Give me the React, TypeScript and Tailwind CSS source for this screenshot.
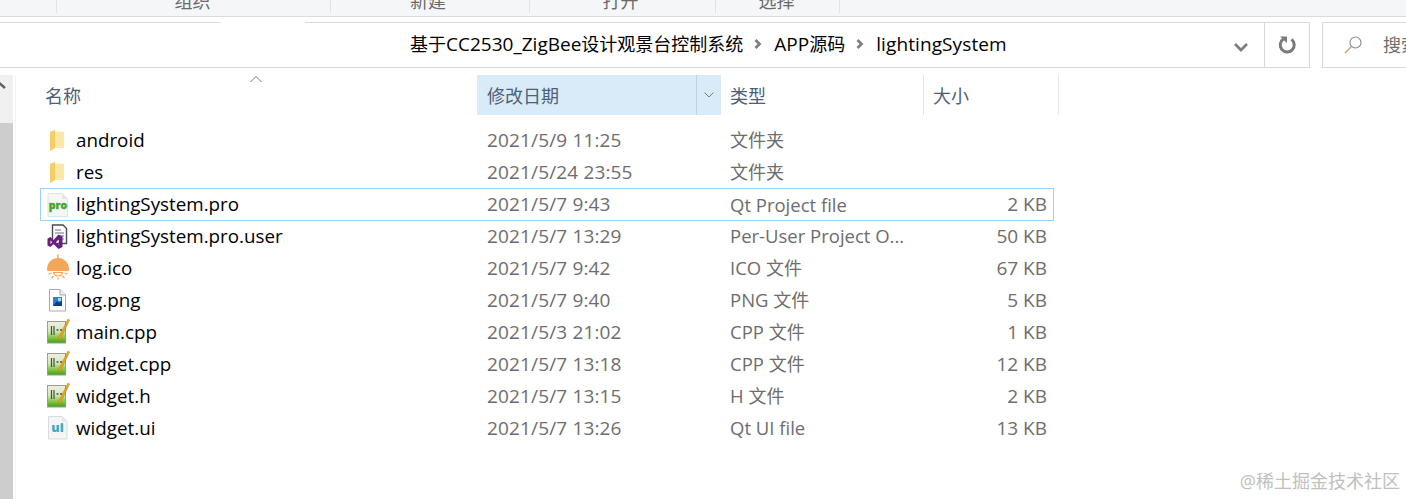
import React from "react";

const font = { fontFamily: '"Open Sans","Noto Sans CJK SC",sans-serif' };

function Mix({ text }: { text: string }) {
  const parts = text.split(/([\u4e00-\u9fff]+)/).filter(Boolean);
  return (
    <>
      {parts.map((p, i) =>
        /[\u4e00-\u9fff]/.test(p) ? (
          <span key={i} className="text-[18px]">{p}</span>
        ) : (
          <span key={i}>{p}</span>
        )
      )}
    </>
  );
}

function Folder() {
  return (
    <svg width="28" height="28" viewBox="0 0 28 28">
      <path d="M10 5.5 H20 V22 H10 Z" fill="#fde7a6" />
      <path d="M6 6 L10.5 4 L10.5 22 L7 25 L6 24 Z" fill="#f7cd66" />
      <path d="M10.5 4 V22" stroke="#ecbf55" strokeWidth="0.6" />
    </svg>
  );
}
function ProIcon() {
  return (
    <svg width="28" height="28" viewBox="0 0 28 28">
      <path d="M4 2.5 H18 L23.5 8 V25.5 H4 Z" fill="#f6f6f4" stroke="#e2e2e0" strokeWidth="1" />
      <path d="M18 2.5 V8 H23.5 Z" fill="#e6e6e4" />
      <text x="14" y="17.5" textAnchor="middle" fontSize="10.5" fontWeight="800" fill="#41a62a" stroke="#41a62a" strokeWidth="0.3" fontFamily="Open Sans">pro</text>
    </svg>
  );
}
function VsIcon() {
  return (
    <svg width="28" height="28" viewBox="0 0 28 28">
      <path d="M8.5 3 H19 L22.5 6.5 V21.5 H8.5 Z" fill="#fff" stroke="#4a4a58" strokeWidth="1.4" />
      <path d="M11 8 H17 M11 11 H20 M15 14 H20 M18 17 H20" stroke="#6f6f7c" strokeWidth="1.2" />
      <path d="M3.5 16.5 L6.5 15 L9.5 18 L14.5 12.5 L18.5 14.5 V25 L14.5 27 L9.5 22 L6.5 25 L3.5 23.5 Z M6.5 18.5 V22 L8.4 20.2 Z M11.8 20.2 L14.8 22.8 V17.6 Z" fill="#68217a" fillRule="evenodd" />
    </svg>
  );
}
function LampIcon() {
  return (
    <svg width="28" height="28" viewBox="0 0 28 28">
      <path d="M14 0.5 V5" stroke="#f6a24c" strokeWidth="1.3" />
      <path d="M3 15.5 C3 8.5 8 4 14 4 C20 4 25 8.5 25 15.5 C25 16.5 24.5 17 23.5 17 H4.5 C3.5 17 3 16.5 3 15.5 Z" fill="#f9a557" />
      <path d="M9.5 18.5 C10 21 12 22 14 22 C16 22 18 21 18.5 18.5 Z" fill="none" stroke="#f6a24c" strokeWidth="1.2" />
      <path d="M4.5 20 L7.5 19 M23.5 20 L20.5 19 M7.5 24 L9.5 22 M20.5 24 L18.5 22 M14 23.5 V25.5" stroke="#f6a24c" strokeWidth="1.2" />
    </svg>
  );
}
function PngIcon() {
  return (
    <svg width="28" height="28" viewBox="0 0 28 28">
      <path d="M5.5 3.5 H16 L21.5 9 V25 H5.5 Z" fill="#fff" stroke="#a3a9b0" strokeWidth="1" />
      <path d="M16 3.5 V9 H21.5" fill="#eef0f2" stroke="#a3a9b0" strokeWidth="1" />
      <rect x="9" y="11" width="9" height="9" fill="#2a7fd0" />
      <path d="M9 20 L13 15 L15.5 17 L18 14.5 V20 Z" fill="#0f3e80" />
      <rect x="14" y="12" width="3" height="3" fill="#a9d6f7" />
    </svg>
  );
}
function CppIcon() {
  const id = React.useId();
  return (
    <svg width="28" height="28" viewBox="0 0 28 28">
      <defs>
        <linearGradient id={id} x1="0" y1="0" x2="0" y2="1">
          <stop offset="0" stopColor="#eef0e6" />
          <stop offset="0.45" stopColor="#d5e8b8" />
          <stop offset="0.7" stopColor="#92cc4f" />
          <stop offset="1" stopColor="#3f9e17" />
        </linearGradient>
      </defs>
      <rect x="3.5" y="3.5" width="18" height="21.5" fill={`url(#${id})`} stroke="#9a9a9a" strokeWidth="1" />
      <path d="M7.5 8 V17 M10 8 V17" stroke="#4b4b4b" strokeWidth="1.2" />
      <path d="M12.5 12 H14.5 M16 12 H18" stroke="#4b4b4b" strokeWidth="1.4" />
      <path d="M24 1 L25.5 2 L17 20 L14.5 22.5 L14.8 19 Z" fill="#e9a520" stroke="#b07a14" strokeWidth="0.5" />
    </svg>
  );
}
function UiIcon() {
  return (
    <svg width="28" height="28" viewBox="0 0 28 28">
      <path d="M4.5 2.5 H18 L23 7.5 V25 H4.5 Z" fill="#f3f5f6" stroke="#d9dcde" strokeWidth="1" />
      <path d="M18 2.5 V7.5 H23 Z" fill="#e3e5e7" />
      <text x="13.5" y="18" textAnchor="middle" fontSize="12.5" fontWeight="800" fill="#3ba9c4" fontFamily="Open Sans">ui</text>
    </svg>
  );
}
function Crumb() {
  return (
    <svg width="10" height="12" viewBox="0 0 10 12" className="ml-[10px] mr-[11px]">
      <path d="M2.5 2 L6.5 6 L2.5 10" fill="none" stroke="#808080" strokeWidth="2.8" />
    </svg>
  );
}

const files = [
  { icon: <Folder />, name: "android", date: "2021/5/9 11:25", type: "文件夹", size: "" },
  { icon: <Folder />, name: "res", date: "2021/5/24 23:55", type: "文件夹", size: "" },
  { icon: <ProIcon />, name: "lightingSystem.pro", date: "2021/5/7 9:43", type: "Qt Project file", size: "2 KB", sel: true },
  { icon: <VsIcon />, name: "lightingSystem.pro.user", date: "2021/5/7 13:29", type: "Per-User Project O...", size: "50 KB" },
  { icon: <LampIcon />, name: "log.ico", date: "2021/5/7 9:42", type: "ICO 文件", size: "67 KB" },
  { icon: <PngIcon />, name: "log.png", date: "2021/5/7 9:40", type: "PNG 文件", size: "5 KB" },
  { icon: <CppIcon />, name: "main.cpp", date: "2021/5/3 21:02", type: "CPP 文件", size: "1 KB" },
  { icon: <CppIcon />, name: "widget.cpp", date: "2021/5/7 13:18", type: "CPP 文件", size: "12 KB" },
  { icon: <CppIcon />, name: "widget.h", date: "2021/5/7 13:15", type: "H 文件", size: "2 KB" },
  { icon: <UiIcon />, name: "widget.ui", date: "2021/5/7 13:26", type: "Qt UI file", size: "13 KB" },
];

export default function App() {
  return (
    <div style={font} className="relative flex h-[499px] w-[1406px] flex-col overflow-hidden bg-white text-[19px] text-black">
      {/* ribbon */}
      <div className="flex h-[17px] shrink-0 overflow-hidden border-b border-[#dadbdc] bg-[#f5f6f7] pl-[56px] text-[18px] text-[#6a6a6a]">
        {[
          ["组织", "w-[274px] pr-[2px]"],
          ["新建", "w-[199px] pr-[4px]"],
          ["打开", "w-[186px] pr-[4px]"],
          ["选择", "w-[125px] pr-[2px]"],
        ].map(([t, w]) => (
          <div key={t} className={`${w} flex h-[13px] justify-center border-l border-[#e2e3e5] leading-[3px] last:border-r`}>
            {t}
          </div>
        ))}
      </div>

      {/* address */}
      <div className="relative mt-[5px] flex h-[46px] shrink-0">
        <div className="absolute left-[221px] top-0 h-px w-[84px] bg-white" />
        <div className="flex w-[1265px] items-center border-y border-r border-[#d9d9d9] pb-[2px] pl-[410px] leading-none">
          <span><Mix text="基于CC2530_ZigBee设计观景台控制系统" /></span>
          <Crumb />
          <span><Mix text="APP源码" /></span>
          <Crumb />
          <span className="tracking-[0.1px]">lightingSystem</span>
          <svg width="16" height="10" viewBox="0 0 16 10" className="ml-[226px] mt-[5px]">
            <path d="M2 2 L8 8 L14 2" fill="none" stroke="#7f7f7f" strokeWidth="2.8" />
          </svg>
        </div>
        <div className="flex w-[45px] items-center justify-center border-y border-r border-[#d9d9d9]">
          <svg width="20" height="20" viewBox="0 0 20 20">
            <path d="M6.5 4 A7 7 0 1 0 14.5 4.4" fill="none" stroke="#7a7a7a" strokeWidth="3" />
            <path d="M3 1.5 H10 V8 Z" fill="#7a7a7a" />
          </svg>
        </div>
        <div className="ml-[12px] flex flex-1 items-center overflow-hidden whitespace-nowrap border-y border-l border-[#d9d9d9] pl-[20px] text-[18px] text-[#6d6d6d]">
          <svg width="20" height="20" viewBox="0 0 20 20" className="shrink-0">
            <circle cx="12.5" cy="7.5" r="5.5" fill="none" stroke="#7f8a96" strokeWidth="1.1" />
            <path d="M8.5 11.5 L2 18" stroke="#c9a27c" strokeWidth="1.4" />
          </svg>
          <span className="ml-[20px] shrink-0">搜索</span>
        </div>
      </div>

      {/* body */}
      <div className="mt-[7px] flex min-h-0 flex-1">
        <div className="flex w-[13px] shrink-0 flex-col bg-[#f0f0f0]">
          <svg width="13" height="48" viewBox="0 0 13 48" className="shrink-0">
            <path d="M-3 6 L5 13" fill="none" stroke="#606060" strokeWidth="2.4" />
          </svg>
          <div className="flex-1 bg-[#cdcdcd]" />
        </div>
        <div className="ml-[2px] w-px shrink-0 bg-[#f4f4f4]" />
        <div className="min-w-0 flex-1">
          {/* header */}
          <div className="relative ml-[28px] flex h-[40px] w-[1016px] text-[18px] text-[#4c607a]">
            <div className="flex w-[433px] items-center pl-px pt-[2px]">名称</div>
            <svg width="12" height="8" viewBox="0 0 12 8" className="absolute left-[206px] top-0">
              <path d="M0.5 7 L6 1.5 L11.5 7" fill="none" stroke="#757575" strokeWidth="1" />
            </svg>
            <div className="flex w-[244px] bg-[#d9ebf9]">
              <div className="flex w-[220px] items-center border-r border-[#bcd3e6] pl-[10px] pt-[2px]">修改日期</div>
              <div className="flex flex-1 items-center justify-center">
                <svg width="10" height="6" viewBox="0 0 10 6">
                  <path d="M0.5 0.5 L5 5 L9.5 0.5" fill="none" stroke="#6f7f8e" strokeWidth="1" />
                </svg>
              </div>
            </div>
            <div className="flex w-[203px] items-center border-r border-[#e5e5e5] pl-[9px] pt-[2px]">类型</div>
            <div className="flex w-[135px] items-center border-r border-[#e5e5e5] pl-[9px] pt-[2px]">大小</div>
          </div>

          {/* rows */}
          <div className="ml-[24px] mt-[9px] w-[1014px]">
            {files.map((f) => (
              <div
                key={f.name}
                className={`flex items-center ${f.sel ? "-mb-px h-[33px] border border-[#99d1ff]" : "h-8 border border-transparent"}`}
              >
                <div className="ml-[3px] h-[28px] w-[28px] shrink-0">{f.icon}</div>
                <div className="w-[415px] shrink-0 pl-[4px] text-[18.8px]">{f.name}</div>
                <div className="w-[243px] shrink-0 tracking-[0.15px] text-[#6d6d6d]">{f.date}</div>
                <div className="w-[203px] shrink-0 text-[18.5px] text-[#6d6d6d]"><Mix text={f.type} /></div>
                <div className="w-[114px] shrink-0 text-right text-[#6d6d6d]">{f.size}</div>
              </div>
            ))}
          </div>
        </div>
      </div>

      <div className="absolute bottom-[6px] right-[6px] text-[18px] leading-[24px] text-[#c0c0c0]">@稀土掘金技术社区</div>
    </div>
  );
}
